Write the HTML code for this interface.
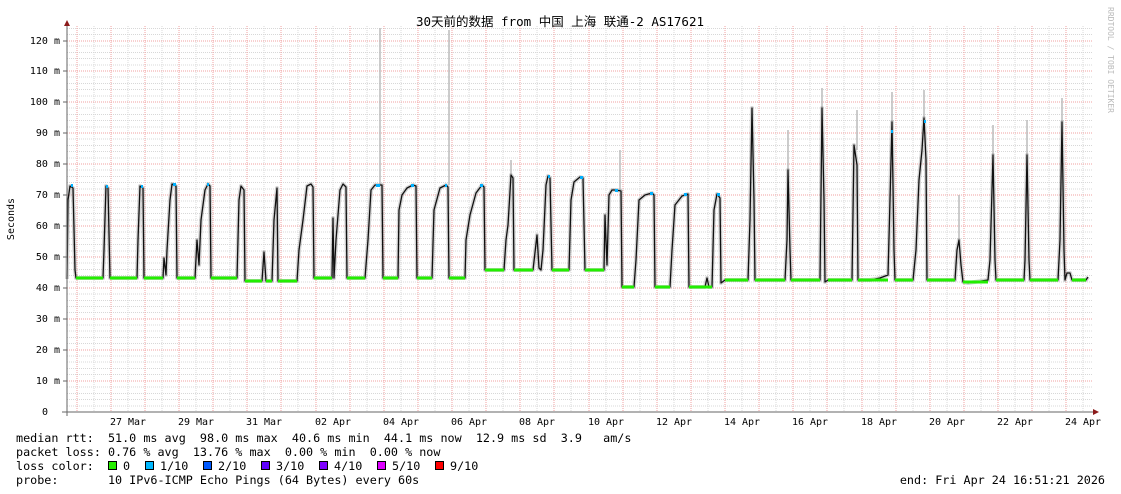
<!DOCTYPE html>
<html><head><meta charset="utf-8"><style>
html,body{margin:0;padding:0;background:#fff;}
body{position:relative;width:1121px;height:494px;overflow:hidden;}
svg{display:block;position:absolute;left:0;top:0;}
.s{font-family:"DejaVu Sans Mono","Liberation Mono",monospace;font-size:10px;fill:#000;}
.t{position:absolute;left:16px;font-family:"DejaVu Sans Mono","Liberation Mono",monospace;font-size:11.75px;line-height:14px;white-space:pre;color:#000;}
</style></head><body>
<svg width="1121" height="494" viewBox="0 0 1121 494" xmlns="http://www.w3.org/2000/svg" xmlns:xlink="http://www.w3.org/1999/xlink">
<defs>
<path id="d" d="M67,279 L68,200 L70,186 L73,188 L75,270 L76,278 L103,278 L104,250 L106,186 L108,188 L110,278 L137,278 L138,240 L140,186 L143,188 L144,278 L163,278 L164,258 L166,275 L167,250 L170,200 L172,184 L176,186 L177,278 L195,278 L197,240 L199,265 L201,220 L205,190 L208,184 L210,186 L211,278 L237,278 L239,200 L241,186 L244,190 L245,281 L262,281 L264,252 L266,281 L272,281 L274,220 L277,188 L278,281 L297,281 L299,250 L303,220 L307,186 L311,184 L313,187 L314,278 L332,278 L333,218 L334,278 L336,240 L340,190 L343,184 L346,187 L347,278 L365,278 L368,240 L371,190 L375,185 L382,185 L383,278 L398,278 L399,210 L402,195 L407,188 L413,185 L416,186 L417,278 L432,278 L434,210 L440,188 L446,185 L448,187 L449,278 L465,278 L466,240 L470,215 L476,193 L482,185 L484,187 L485,270 L504,270 L506,240 L508,225 L511,175 L513,178 L514,270 L533,270 L537,235 L539,268 L541,270 L543,250 L546,185 L548,176 L550,178 L552,270 L569,270 L571,200 L574,182 L580,177 L583,178 L585,270 L604,270 L605,215 L607,265 L609,195 L612,190 L616,190 L621,191 L622,287 L634,287 L636,260 L639,200 L645,195 L652,193 L654,195 L655,287 L670,287 L672,250 L675,205 L682,196 L688,194 L689,287 L705,287 L707,278 L709,287 L712,287 L714,210 L717,194 L720,198 L721,283 L725,280 L748,280 L750,220 L752,108 L754,200 L755,280 L785,280 L787,240 L788,170 L790,250 L791,280 L820,280 L822,108 L824,200 L825,282 L828,280 L852,280 L854,145 L857,165 L858,280 L870,280 L880,278 L888,275 L890,200 L892,122 L894,250 L895,280 L913,280 L916,250 L919,180 L922,150 L924,118 L926,160 L927,280 L955,280 L957,250 L959,240 L961,265 L963,282 L968,283 L988,280 L990,260 L993,155 L995,260 L996,280 L1024,280 L1025,260 L1027,155 L1029,260 L1030,280 L1058,280 L1060,240 L1062,122 L1064,250 L1065,280 L1067,273 L1070,273 L1072,280 L1086,280 L1088,277"/>
</defs>
<rect width="1121" height="494" fill="#fff"/>
<g stroke="#d8d8d8" stroke-width="1" stroke-dasharray="1,1" shape-rendering="crispEdges">
<path d="M67,405.8H1093M67,399.6H1093M67,393.4H1093M67,387.2H1093M67,374.6H1093M67,368.4H1093M67,362.2H1093M67,356H1093M67,343.6H1093M67,337.4H1093M67,331.2H1093M67,325H1093M67,312.7H1093M67,306.5H1093M67,300.3H1093M67,294H1093M67,281.8H1093M67,275.6H1093M67,269.4H1093M67,263.2H1093M67,250.8H1093M67,244.6H1093M67,238.4H1093M67,232.2H1093M67,219.8H1093M67,213.6H1093M67,207.4H1093M67,201.2H1093M67,188.8H1093M67,182.6H1093M67,176.4H1093M67,170.2H1093M67,157.8H1093M67,151.6H1093M67,145.4H1093M67,139.2H1093M67,126.8H1093M67,120.6H1093M67,114.4H1093M67,108.2H1093M67,95.8H1093M67,89.6H1093M67,83.4H1093M67,77.2H1093M67,64.8H1093M67,58.6H1093M67,52.4H1093M67,46.2H1093M67,34.6H1093M67,28.4H1093"/>
<path d="M94,26V412M128,26V412M162,26V412M196,26V412M230,26V412M264,26V412M298,26V412M333,26V412M367,26V412M401,26V412M435,26V412M469,26V412M503,26V412M537,26V412M571,26V412M606,26V412M640,26V412M674,26V412M708,26V412M742,26V412M776,26V412M810,26V412M844,26V412M879,26V412M913,26V412M947,26V412M981,26V412M1015,26V412M1049,26V412M1083,26V412"/>
</g>
<g stroke="#f0a0a0" stroke-width="1" stroke-dasharray="1,1" shape-rendering="crispEdges">
<path d="M67,381H1093M67,350H1093M67,319H1093M67,288H1093M67,257H1093M67,226H1093M67,195H1093M67,164H1093M67,133H1093M67,102H1093M67,71H1093M67,41H1093"/>
<path d="M77,26V412M111,26V412M145,26V412M179,26V412M213,26V412M247,26V412M281,26V412M316,26V412M350,26V412M384,26V412M418,26V412M452,26V412M486,26V412M520,26V412M554,26V412M589,26V412M623,26V412M657,26V412M691,26V412M725,26V412M759,26V412M793,26V412M827,26V412M862,26V412M896,26V412M930,26V412M964,26V412M998,26V412M1032,26V412M1066,26V412"/>
</g>
<g stroke="#bbb" stroke-width="1.5" fill="none">
<path d="M380,185V28M449,185V30M620,190V150M788,170V130M822,108V88M857,150V110M892,122V92M924,118V90M959,240V195M993,155V125M1027,155V120M1062,122V98M511,175V160"/>
</g>
<use href="#d" xlink:href="#d" fill="none" stroke="#888" stroke-opacity="0.35" stroke-width="4" stroke-linejoin="round"/>
<use href="#d" xlink:href="#d" fill="none" stroke="#111" stroke-width="1.3" stroke-linejoin="round"/>
<g stroke="#22ee00" stroke-width="3" fill="none">
<path d="M76,278H103M110,278H137M144,278H163M177,278H195M211,278H237M245,281H262M266,281H272M278,281H297M314,278H332M347,278H365M383,278H398M417,278H432M449,278H465M485,270H504M514,270H533M552,270H569M585,270H604M622,287H634M655,287H670M689,287H712M725,280H748M755,280H785M791,280H820M828,280H852M858,280H888M895,280H913M927,280H955M963,282H988M996,280H1024M1030,280H1058M1072,280H1086"/>
</g>
<g fill="#00b0ff">
<rect x="71" y="184" width="2" height="3"/><rect x="106" y="185" width="2" height="3"/><rect x="141" y="185" width="2" height="3"/><rect x="173" y="183" width="3" height="3"/><rect x="207" y="183" width="2" height="3"/><rect x="376" y="184" width="4" height="3"/><rect x="411" y="184" width="3" height="3"/><rect x="445" y="184" width="2" height="3"/><rect x="480" y="184" width="3" height="3"/><rect x="548" y="175" width="2" height="3"/><rect x="580" y="176" width="3" height="3"/><rect x="615" y="189" width="3" height="3"/><rect x="650" y="192" width="3" height="3"/><rect x="684" y="193" width="3" height="3"/><rect x="717" y="193" width="3" height="3"/><rect x="891" y="130" width="2" height="3"/><rect x="924" y="120" width="2" height="3"/>
</g>
<g stroke="#666" stroke-width="1" shape-rendering="crispEdges">
<path d="M67,24V416M62,412H1095"/>
<path d="M63,381H67M63,350H67M63,319H67M63,288H67M63,257H67M63,226H67M63,195H67M63,164H67M63,133H67M63,102H67M63,71H67M63,41H67"/>
</g>
<path d="M64,26L67,20L70,26Z" fill="#8b1a1a"/>
<path d="M1093,409L1099,412L1093,415Z" fill="#8b1a1a"/>
<g class="s" text-anchor="end">
<text x="48" y="415">0</text>
<text x="60" y="384">10 m</text><text x="60" y="353">20 m</text><text x="60" y="322">30 m</text><text x="60" y="291">40 m</text><text x="60" y="260">50 m</text><text x="60" y="229">60 m</text><text x="60" y="198">70 m</text><text x="60" y="167">80 m</text><text x="60" y="136">90 m</text><text x="60" y="105">100 m</text><text x="60" y="74">110 m</text><text x="60" y="44">120 m</text>
</g>
<g class="s" text-anchor="middle">
<text x="128" y="425">27 Mar</text><text x="196" y="425">29 Mar</text><text x="264" y="425">31 Mar</text><text x="333" y="425">02 Apr</text><text x="401" y="425">04 Apr</text><text x="469" y="425">06 Apr</text><text x="537" y="425">08 Apr</text><text x="606" y="425">10 Apr</text><text x="674" y="425">12 Apr</text><text x="742" y="425">14 Apr</text><text x="810" y="425">16 Apr</text><text x="879" y="425">18 Apr</text><text x="947" y="425">20 Apr</text><text x="1015" y="425">22 Apr</text><text x="1083" y="425">24 Apr</text>
</g>
<text x="14" y="219" class="s" font-size="11" text-anchor="middle" transform="rotate(-90 14 219)">Seconds</text>
<text x="560" y="26" text-anchor="middle" style="font-family:'DejaVu Sans Mono','Noto Sans CJK SC',monospace;font-size:12.5px">30天前的数据 from 中国 上海 联通-2 AS17621</text>
<text x="1108" y="60" text-anchor="middle" transform="rotate(90 1108 60)" style="font-family:'DejaVu Sans Mono',monospace;font-size:8px;fill:#bbb">RRDTOOL / TOBI OETIKER</text>
<g stroke="#000" stroke-width="1" shape-rendering="crispEdges">
<rect x="108.5" y="461.5" width="8" height="8" fill="#26ee00"/>
<rect x="145.5" y="461.5" width="8" height="8" fill="#00b8ff"/>
<rect x="203.5" y="461.5" width="8" height="8" fill="#0059ff"/>
<rect x="261.5" y="461.5" width="8" height="8" fill="#5e00ff"/>
<rect x="319.5" y="461.5" width="8" height="8" fill="#7e00ff"/>
<rect x="377.5" y="461.5" width="8" height="8" fill="#dd00ff"/>
<rect x="435.5" y="461.5" width="8" height="8" fill="#ff0000"/>
</g>
</svg>
<div class="t" style="top:431px">median rtt:  51.0 ms avg  98.0 ms max  40.6 ms min  44.1 ms now  12.9 ms sd  3.9   am/s</div>
<div class="t" style="top:445px">packet loss: 0.76 % avg  13.76 % max  0.00 % min  0.00 % now</div>
<div class="t" style="top:459px">loss color:</div>
<div class="t" style="top:459px;left:123px">0</div>
<div class="t" style="top:459px;left:160px">1/10</div>
<div class="t" style="top:459px;left:218px">2/10</div>
<div class="t" style="top:459px;left:276px">3/10</div>
<div class="t" style="top:459px;left:334px">4/10</div>
<div class="t" style="top:459px;left:392px">5/10</div>
<div class="t" style="top:459px;left:450px">9/10</div>
<div class="t" style="top:473px">probe:       10 IPv6-ICMP Echo Pings (64 Bytes) every 60s</div>
<div class="t" style="top:473px;left:auto;right:16px">end: Fri Apr 24 16:51:21 2026</div>
</body></html>
